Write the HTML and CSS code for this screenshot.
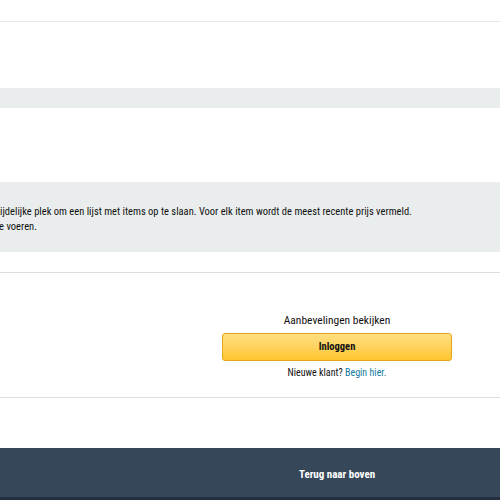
FILE: index.html
```html
<!DOCTYPE html>
<html lang="nl">
<head>
<meta charset="utf-8">
<link rel="stylesheet" href="styles.css">
</head>
<body>
<div class="page">
  <div class="top"></div>
  <div class="blank1"></div>
  <div class="band-thin"></div>
  <div class="blank2"></div>
  <div class="band-info">
    <p class="info-line l1">tijdelijke plek om een lijst met items op te slaan. Voor elk item wordt de meest recente prijs vermeld.</p>
    <p class="info-line l2">te voeren.</p>
  </div>
  <div class="blank3"></div>
  <div class="signin">
    <div class="col">
      <div class="rec">Aanbevelingen bekijken</div>
      <a class="btn" href="#">Inloggen</a>
      <div class="new">Nieuwe klant? <a class="link" href="#">Begin hier.</a></div>
    </div>
  </div>
  <div class="blank4"></div>
  <footer class="footer">
    <div class="col"><a class="back" href="#">Terug naar boven</a></div>
  </footer>
  <div class="strip"></div>
</div>
</body>
</html>
```
FILE: styles.css
```css
html, body {
  margin: 0;
  padding: 0;
  overflow: hidden;
  background: #fff;
}
body {
  font-family: "Roboto Condensed", "Roboto", "Liberation Sans", sans-serif;
  font-stretch: 75%;
  color: #111;
}
.page {
  width: 500px;
}
.top {
  height: 21px;
  border-bottom: 1px solid #e7e7e7;
}
.blank1 { height: 66px; }
.band-thin {
  height: 20px;
  background: #eaeded;
}
.blank2 { height: 74px; }
.band-info {
  height: 70px;
  background: #eaeded;
  box-sizing: border-box;
  padding-top: 22px;
}
.info-line {
  margin: 0;
  font-size: 10.5px;
  line-height: 15px;
  white-space: nowrap;
}
.l1 { margin-left: -3px; }
.l2 { margin-left: -4px; }
.blank3 {
  height: 20px;
  border-bottom: 1px solid #dddddd;
}
.signin {
  height: 125px;
  box-sizing: border-box;
  padding-top: 40px;
  border-bottom: 1px solid #dddddd;
}
.col {
  width: 230px;
  margin-left: 222px;
  text-align: center;
}
.rec {
  font-size: 11.5px;
  line-height: 15px;
}
.btn {
  display: block;
  margin-top: 5px;
  height: 28px;
  box-sizing: border-box;
  line-height: 26px;
  border: 1px solid #e4a715;
  border-radius: 3px;
  background: linear-gradient(to bottom, #ffde80 0%, #ffd462 45%, #ffc52e 100%);
  color: #111;
  font-size: 10.5px;
  font-weight: bold;
  text-decoration: none;
}
.new {
  margin-top: 4px;
  font-size: 10px;
  line-height: 15px;
}
.link {
  color: #137ba0;
  text-decoration: none;
}
.blank4 { height: 50px; }
.footer {
  height: 49px;
  background: #37475a;
  display: flex;
  align-items: center;
}
.back {
  color: #fff;
  font-size: 11px;
  font-weight: bold;
  text-decoration: none;
}
.strip {
  height: 10px;
  background: #232f3e;
}
```
